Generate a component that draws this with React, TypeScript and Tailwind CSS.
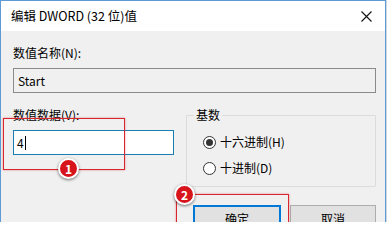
import React from "react";

const font = { fontFamily: '"Noto Sans CJK SC", "Noto Sans", sans-serif' };

function Badge({ n, className }: { n: string; className: string }) {
  return (
    <div
      className={`absolute w-[21px] h-[21px] rounded-full bg-[#d7141c] border-2 border-white shadow-[0_1px_3px_rgba(0,0,0,0.55)] flex items-center justify-center text-white text-[12px] font-bold leading-none ${className}`}
    >
      {n}
    </div>
  );
}

export default function App() {
  return (
    <div className="relative w-[387px] h-[222px] overflow-hidden bg-[#cfd8e2] text-black" style={font}>
      <div className="w-[386px] h-[222px] flex flex-col border-l border-r border-t border-[#5d9bd6] bg-[#f0f0f0]">
        {/* title bar */}
        <div className="h-[30px] bg-white flex items-center pl-[10px] pr-[9px] shrink-0">
          <span className="text-[12.5px] leading-[16px] flex-1">编辑 DWORD (32 位)值</span>
          <svg width="11" height="11" viewBox="0 0 11 11" className="mr-[4px]">
            <path d="M0.5 0.5 L10.5 10.5 M10.5 0.5 L0.5 10.5" stroke="#111" strokeWidth="1.1" />
          </svg>
        </div>
        {/* body */}
        <div className="flex flex-col pl-[12px] pr-[9px] pt-[14px] text-[12px] leading-[16px]">
          <div>数值名称(N):</div>
          <div className="mt-[7px] h-[25px] border border-[#8a8a8a] bg-[#f0f0f0] flex items-center pl-[4px]">Start</div>
          <div className="mt-[14px] flex gap-[12px]">
            <div className="w-[161px] flex flex-col">
              <div>数值数据(V):</div>
              <div className="mt-[7px] h-[25px] border border-[#1a7fb0] bg-white flex items-center pl-[3px]">
                <span>4</span>
                <span className="ml-[1px] w-[1px] h-[14px] bg-black" />
              </div>
            </div>
            <fieldset className="flex-1 border border-[#dcdcdc] rounded-[1px] px-0 pb-[10px]">
              <legend className="ml-[7px] px-[2px] leading-[16px]">基数</legend>
              <div className="mt-[11px] flex items-center pl-[16px] h-[16px]">
                <span className="w-[13px] h-[13px] rounded-full border border-[#333] bg-white flex items-center justify-center">
                  <span className="w-[7px] h-[7px] rounded-full bg-[#333]" />
                </span>
                <span className="ml-[4px]">十六进制(H)</span>
              </div>
              <div className="mt-[10px] flex items-center pl-[16px] h-[16px]">
                <span className="w-[13px] h-[13px] rounded-full border border-[#333] bg-white" />
                <span className="ml-[4px]">十进制(D)</span>
              </div>
            </fieldset>
          </div>
          <div className="mt-[18px] flex justify-end gap-[9px]">
            <div className="w-[88px] h-[28px] border-2 border-[#0078d7] bg-[#e1e1e1] flex items-center justify-center">确定</div>
            <div className="w-[86px] h-[28px] border border-[#adadad] bg-[#e1e1e1] flex items-center justify-center">取消</div>
          </div>
        </div>
      </div>
      {/* annotations */}
      <div className="absolute left-[3px] top-[118px] w-[122px] h-[52px] border border-[#d8262f] shadow-[0_0_2px_rgba(216,38,47,0.5)]" />
      <div className="absolute left-[176px] top-[194px] w-[113px] h-[40px] border border-[#d8262f] shadow-[0_0_2px_rgba(216,38,47,0.5)]" />
      <Badge n="1" className="left-[58px] top-[158px]" />
      <Badge n="2" className="left-[174px] top-[184px]" />
    </div>
  );
}
